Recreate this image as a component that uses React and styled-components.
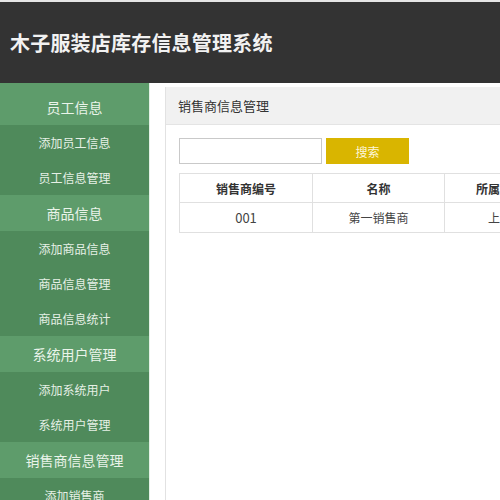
import React from "react";
import styled, { createGlobalStyle } from "styled-components";

const GlobalStyle = createGlobalStyle`
  html, body {
    margin: 0;
    padding: 0;
    overflow: hidden;
    background: #fff;
    font-family: "Noto Sans CJK SC", "Noto Sans", sans-serif;
  }
`;

const Page = styled.div`
  width: 500px;
  height: 500px;
  overflow: hidden;
  display: flex;
  flex-direction: column;
`;

const Header = styled.header`
  height: 81px;
  border-top: 2px solid #e6e6e6;
  background: #333333;
  display: flex;
  align-items: center;
  padding-left: 10px;
  flex-shrink: 0;
`;

const Title = styled.h1`
  margin: 0;
  color: #f2f2f2;
  font-size: 20px;
  font-weight: 700;
  letter-spacing: 0.2px;
`;

const Body = styled.div`
  flex: 1;
  display: flex;
  min-height: 0;
`;

const Sidebar = styled.nav`
  width: 149px;
  flex-shrink: 0;
  background: #5e9c6b;
  padding-top: 6px;
  border-right: 1px solid #e4f1e6;
`;

const GroupTitle = styled.div`
  height: 36px;
  display: flex;
  align-items: center;
  justify-content: center;
  background: #5e9c6b;
  color: #eaf4ea;
  font-size: 14px;
`;

const NavItem = styled.div`
  height: 35px;
  display: flex;
  align-items: center;
  justify-content: center;
  background: #4f8a5b;
  color: #e6f0e6;
  font-size: 12px;
`;

const Main = styled.main`
  flex: 1;
  padding: 4px 0 0 15px;
  min-width: 0;
`;

const Panel = styled.section`
  width: 600px;
  height: 100%;
  border-left: 1px solid #e2e2e2;
`;

const PanelHead = styled.div`
  height: 37px;
  background: #f1f1f1;
  border-bottom: 1px solid #e4e4e4;
  display: flex;
  align-items: center;
  padding-left: 12px;
  color: #333;
  font-size: 13px;
`;

const PanelBody = styled.div`
  padding: 13px 13px;
`;

const SearchRow = styled.div`
  display: flex;
  gap: 4px;
  height: 26px;
`;

const SearchInput = styled.input`
  width: 143px;
  height: 26px;
  box-sizing: border-box;
  border: 1px solid #c9c9c9;
  outline: none;
  padding: 0 4px;
`;

const SearchButton = styled.button`
  width: 83px;
  height: 26px;
  border: none;
  background: #d9b500;
  color: #fdf7da;
  font-family: inherit;
  font-size: 12px;
`;

const Table = styled.table`
  margin-top: 9px;
  border-collapse: collapse;
  table-layout: fixed;
`;

const Th = styled.th`
  width: ${(p) => p.w}px;
  height: 28px;
  border: 1px solid #e0e0e0;
  font-size: 12px;
  font-weight: 700;
  color: #333;
  text-align: center;
  padding: 0;
`;

const Td = styled.td`
  height: 29px;
  border: 1px solid #e0e0e0;
  font-size: ${(p) => (p.num ? 13 : 12)}px;
  color: #444;
  text-align: center;
  padding: 0;
`;

const menu = [
  { title: "员工信息", items: ["添加员工信息", "员工信息管理"] },
  { title: "商品信息", items: ["添加商品信息", "商品信息管理", "商品信息统计"] },
  { title: "系统用户管理", items: ["添加系统用户", "系统用户管理"] },
  { title: "销售商信息管理", items: ["添加销售商", "销售商信息管理"] },
];

const columns = [
  { label: "销售商编号", w: 132 },
  { label: "名称", w: 131 },
  { label: "所属地区", w: 110 },
  { label: "联系电话", w: 116 },
];

const rows = [["001", "第一销售商", "上海", "13800000000"]];

export default function App() {
  return (
    <Page>
      <GlobalStyle />
      <Header>
        <Title>木子服装店库存信息管理系统</Title>
      </Header>
      <Body>
        <Sidebar>
          {menu.map((g) => (
            <div key={g.title}>
              <GroupTitle>{g.title}</GroupTitle>
              {g.items.map((it) => (
                <NavItem key={it}>{it}</NavItem>
              ))}
            </div>
          ))}
        </Sidebar>
        <Main>
          <Panel>
            <PanelHead>销售商信息管理</PanelHead>
            <PanelBody>
              <SearchRow>
                <SearchInput type="text" />
                <SearchButton>搜索</SearchButton>
              </SearchRow>
              <Table>
                <thead>
                  <tr>
                    {columns.map((c) => (
                      <Th key={c.label} w={c.w}>
                        {c.label}
                      </Th>
                    ))}
                  </tr>
                </thead>
                <tbody>
                  {rows.map((r) => (
                    <tr key={r[0]}>
                      {r.map((v, i) => (
                        <Td key={i} num={i === 0}>
                          {v}
                        </Td>
                      ))}
                    </tr>
                  ))}
                </tbody>
              </Table>
            </PanelBody>
          </Panel>
        </Main>
      </Body>
    </Page>
  );
}
